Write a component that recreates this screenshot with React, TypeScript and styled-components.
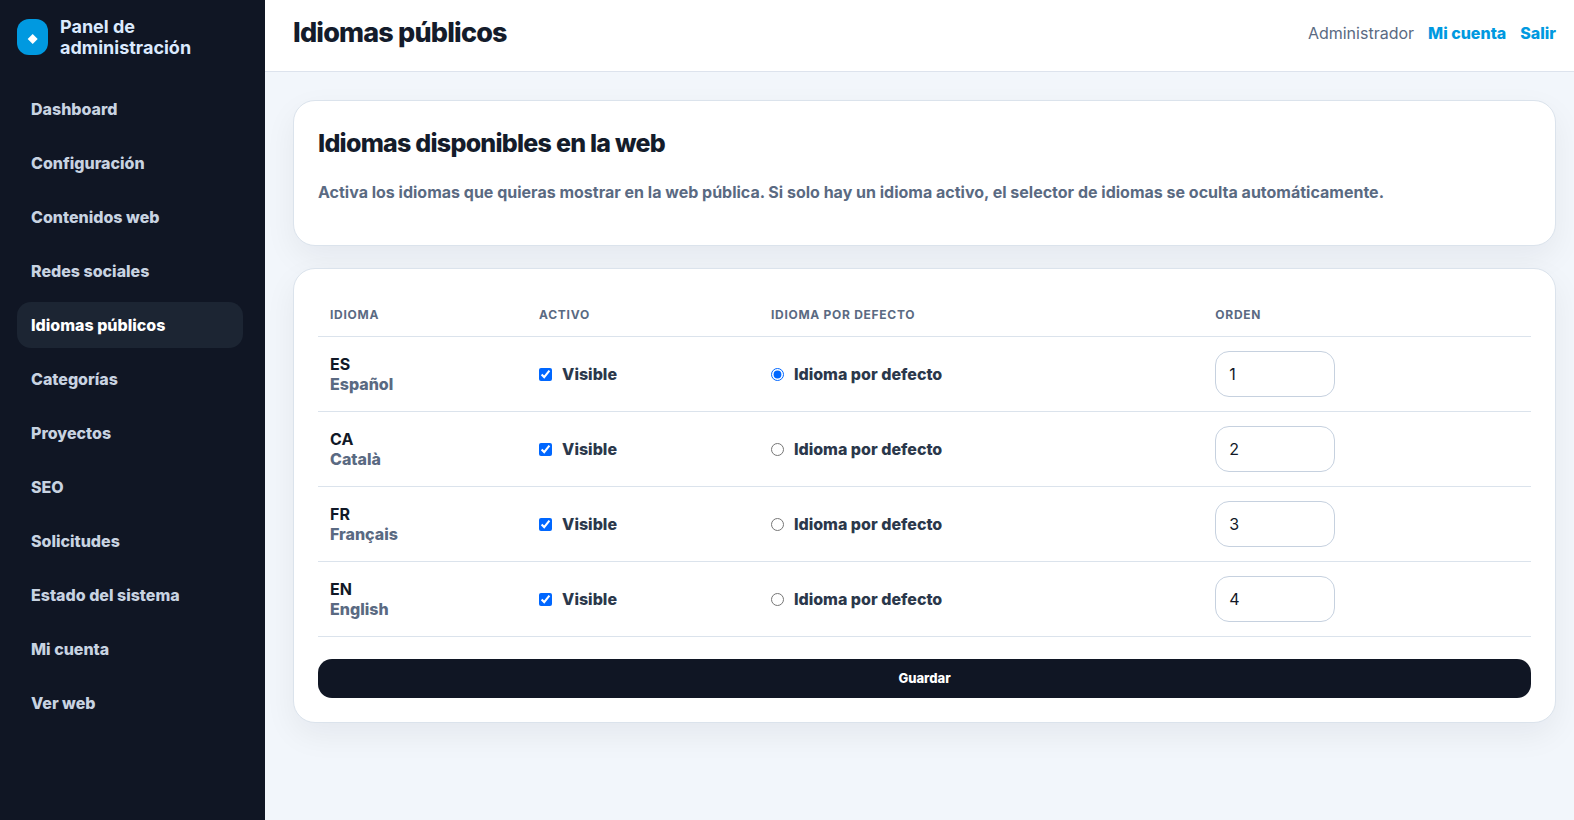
import React, { useState } from "react";
import styled, { createGlobalStyle } from "styled-components";

const GlobalStyle = createGlobalStyle`
  *, *::before, *::after { box-sizing: border-box; }
  body {
    margin: 0;
    background: #f2f6fb;
    color: #111827;
    font-family: Inter, "Liberation Sans", sans-serif;
    font-size: 16px;
    line-height: 20px;
  }
`;

const Shell = styled.div`
  display: grid;
  grid-template-columns: 265px minmax(0, 1fr);
  min-height: 100vh;
`;

const Sidebar = styled.aside`
  padding: 16px 22px 16px 17px;
  background: #101624;
`;

const Brand = styled.div`
  display: flex;
  align-items: center;
  gap: 12px;
  margin-bottom: 28px;
  color: #dbeafe;
  font-size: 18px;
  font-weight: 700;
  line-height: 21px;
`;

const BrandMark = styled.svg`
  flex: none;
  width: 31px;
  height: 36px;
`;

const Nav = styled.nav`
  display: grid;
  gap: 8px;
`;

const NavLink = styled.a<{ $active?: boolean }>`
  padding: 13px 14px;
  border-radius: 14px;
  background: ${(p) => (p.$active ? "#1c2533" : "transparent")};
  color: ${(p) => (p.$active ? "#ffffff" : "#c8d3e1")};
  font-weight: 800;
  text-decoration: none;
`;

const Topbar = styled.header`
  display: flex;
  align-items: center;
  justify-content: space-between;
  padding: 13px 18px 19px 28px;
  border-bottom: 1px solid #dde3ed;
  background: #ffffff;
`;

const PageTitle = styled.h1`
  margin: 0;
  color: #141c2b;
  font-size: 27px;
  font-weight: 800;
  line-height: 39px;
  letter-spacing: -0.03em;
`;

const UserMenu = styled.div`
  display: flex;
  gap: 14px;
  color: #5a6a82;
`;

const UserLink = styled.a`
  color: #0099e0;
  font-weight: 800;
  text-decoration: none;
`;

const Content = styled.main`
  display: grid;
  gap: 22px;
  padding: 28px 18px 28px 28px;
`;

const Card = styled.section`
  padding: 24px;
  border: 1px solid #dbe3ec;
  border-radius: 22px;
  background: #ffffff;
  box-shadow: 0 12px 32px rgba(16, 24, 32, 0.06);
`;

const CardTitle = styled.h2`
  margin: 0 0 20px;
  color: #141c2b;
  font-size: 25px;
  font-weight: 800;
  line-height: 36px;
  letter-spacing: -0.03em;
`;

const Hint = styled.p`
  margin: 0 0 18px;
  color: #5a6a82;
  font-weight: 700;
  line-height: 22px;
`;

const Table = styled.table`
  width: 100%;
  margin-bottom: 22px;
  border-collapse: separate;
  border-spacing: 0;
`;

const HeadCell = styled.th`
  padding: 12px;
  border-bottom: 1px solid #dbe3ec;
  color: #5a6a82;
  font-size: 12px;
  font-weight: 700;
  line-height: 19px;
  letter-spacing: 0.06em;
  text-align: left;
  text-transform: uppercase;
`;

const Cell = styled.td`
  padding: 14px 12px;
  border-bottom: 1px solid #dbe3ec;
`;

const Code = styled.div`
  font-weight: 700;
`;

const Name = styled.div`
  color: #5a6a82;
  font-weight: 800;
`;

const Option = styled.label`
  display: flex;
  align-items: center;
  gap: 10px;
  color: #2b384b;
  font-weight: 800;

  input {
    flex: none;
    width: 13px;
    height: 13px;
    margin: 0;
    accent-color: #0067ff;
  }
`;

const OrderInput = styled.input`
  display: block;
  width: 120px;
  height: 46px;
  padding: 0 13px;
  border: 1px solid #c6d1df;
  border-radius: 14px;
  background: #ffffff;
  color: #111827;
  font: inherit;
`;

const SaveButton = styled.button`
  display: block;
  width: 100%;
  padding: 11px 18px;
  border: 0;
  border-radius: 14px;
  background: #101624;
  color: #ffffff;
  font-family: inherit;
  font-size: 13px;
  font-weight: 800;
  line-height: 17px;
`;

const sections = [
  "Dashboard",
  "Configuración",
  "Contenidos web",
  "Redes sociales",
  "Idiomas públicos",
  "Categorías",
  "Proyectos",
  "SEO",
  "Solicitudes",
  "Estado del sistema",
  "Mi cuenta",
  "Ver web",
];

const languages = [
  { code: "ES", name: "Español" },
  { code: "CA", name: "Català" },
  { code: "FR", name: "Français" },
  { code: "EN", name: "English" },
];

export default function App() {
  const [defaultCode, setDefaultCode] = useState("ES");

  return (
    <>
      <GlobalStyle />
      <Shell>
        <Sidebar>
          <Brand>
            <BrandMark viewBox="0 0 31 36" aria-hidden="true">
              <rect width="31" height="36" rx="12" fill="#0099e0" />
              <path d="M15.7 15 20.7 20 15.7 25 10.7 20Z" fill="#ffffff" />
            </BrandMark>
            <span>Panel de administración</span>
          </Brand>
          <Nav>
            {sections.map((label) => (
              <NavLink key={label} href="#" $active={label === "Idiomas públicos"}>
                {label}
              </NavLink>
            ))}
          </Nav>
        </Sidebar>
        <div>
          <Topbar>
            <PageTitle>Idiomas públicos</PageTitle>
            <UserMenu>
              <span>Administrador</span>
              <UserLink href="#">Mi cuenta</UserLink>
              <UserLink href="#">Salir</UserLink>
            </UserMenu>
          </Topbar>
          <Content>
            <Card>
              <CardTitle>Idiomas disponibles en la web</CardTitle>
              <Hint>
                Activa los idiomas que quieras mostrar en la web pública. Si solo hay un idioma
                activo, el selector de idiomas se oculta automáticamente.
              </Hint>
            </Card>
            <Card as="form" onSubmit={(e: React.FormEvent) => e.preventDefault()}>
              <Table>
                <thead>
                  <tr>
                    <HeadCell scope="col">Idioma</HeadCell>
                    <HeadCell scope="col">Activo</HeadCell>
                    <HeadCell scope="col">Idioma por defecto</HeadCell>
                    <HeadCell scope="col">Orden</HeadCell>
                  </tr>
                </thead>
                <tbody>
                  {languages.map((lang, i) => (
                    <tr key={lang.code}>
                      <Cell>
                        <Code>{lang.code}</Code>
                        <Name>{lang.name}</Name>
                      </Cell>
                      <Cell>
                        <Option>
                          <input type="checkbox" defaultChecked />
                          Visible
                        </Option>
                      </Cell>
                      <Cell>
                        <Option>
                          <input
                            type="radio"
                            name="default"
                            checked={defaultCode === lang.code}
                            onChange={() => setDefaultCode(lang.code)}
                          />
                          Idioma por defecto
                        </Option>
                      </Cell>
                      <Cell>
                        <OrderInput
                          type="number"
                          defaultValue={i + 1}
                          aria-label={`Orden de ${lang.name}`}
                        />
                      </Cell>
                    </tr>
                  ))}
                </tbody>
              </Table>
              <SaveButton type="submit">Guardar</SaveButton>
            </Card>
          </Content>
        </div>
      </Shell>
    </>
  );
}
